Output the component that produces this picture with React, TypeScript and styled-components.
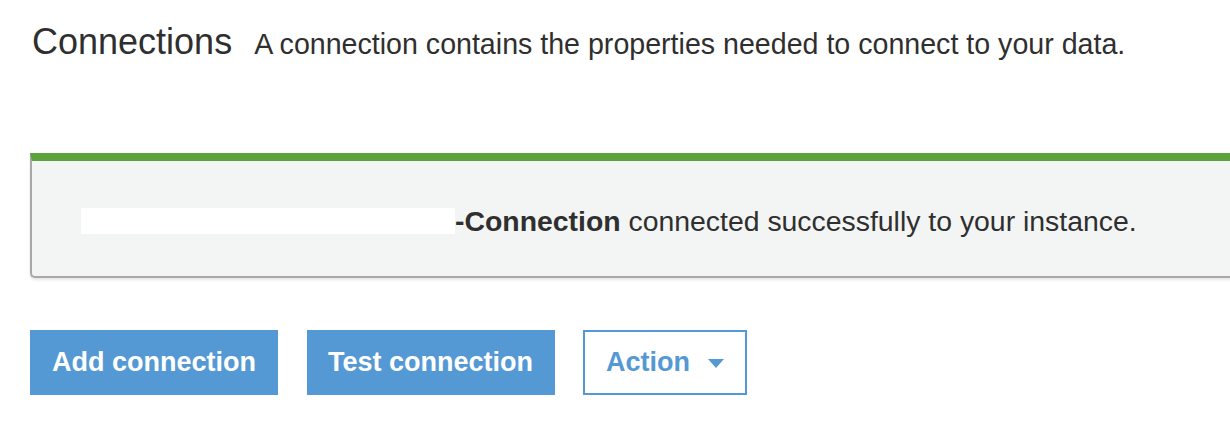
import React from "react";
import styled, { createGlobalStyle } from "styled-components";

const Global = createGlobalStyle`
  html, body { margin: 0; padding: 0; background: #fff; }
  body { font-family: "Liberation Sans", Arial, sans-serif; color: #2f2f2f; overflow: hidden; }
`;

const Page = styled.div`
  width: 1230px;
  height: 424px;
  overflow: hidden;
  padding: 0 0 0 30px;
  box-sizing: border-box;
`;

const Header = styled.header`
  display: flex;
  align-items: baseline;
  gap: 22px;
  padding: 22px 0 0 2px;
  height: 153px;
  box-sizing: border-box;
`;

const Title = styled.h1`
  margin: 0;
  font-size: 36px;
  font-weight: 400;
  line-height: 40px;
  color: #2f2f2f;
`;

const Subtitle = styled.p`
  margin: 0;
  font-size: 28.6px;
  line-height: 32px;
  color: #2f2f2f;
`;

const Flash = styled.div`
  width: 1230px;
  height: 125px;
  box-sizing: border-box;
  background: #f3f5f4;
  border-top: 8px solid #5aa33a;
  border-left: 2px solid #a8a8a8;
  border-bottom: 2px solid #a8a8a8;
  border-bottom-left-radius: 5px;
  box-shadow: 0 2px 3px rgba(0, 0, 0, 0.1);
  display: flex;
  align-items: center;
  padding-left: 49px;
  padding-top: 4px;
`;

const Message = styled.p`
  margin: 0;
  font-size: 28.4px;
  line-height: 32px;
  color: #2f2f2f;
  display: flex;
  align-items: center;
  white-space: pre;
`;

const Redacted = styled.span`
  display: inline-block;
  width: 374px;
  height: 26px;
  background: #fff;
`;

const Strong = styled.strong`
  font-weight: 700;
`;

const Toolbar = styled.div`
  display: flex;
  gap: 28.5px;
  margin-top: 52px;
`;

const Button = styled.button<{ $outline?: boolean; $w: number }>`
  width: ${(p) => p.$w}px;
  height: 65px;
  box-sizing: border-box;
  font-family: "Liberation Sans", Arial, sans-serif;
  font-size: 27px;
  font-weight: 700;
  display: flex;
  align-items: center;
  justify-content: center;
  gap: 18px;
  padding: 0;
  cursor: pointer;
  background: ${(p) => (p.$outline ? "#fff" : "#5499d3")};
  color: ${(p) => (p.$outline ? "#5499d3" : "#fff")};
  border: ${(p) => (p.$outline ? "2px solid #5499d3" : "none")};
`;

const Caret = styled.span`
  width: 0;
  height: 0;
  border-left: 8px solid transparent;
  border-right: 8px solid transparent;
  border-top: 9px solid #5499d3;
  margin-top: 2px;
`;

export default function App() {
  return (
    <>
      <Global />
      <Page>
        <Header>
          <Title>Connections</Title>
          <Subtitle>A connection contains the properties needed to connect to your data.</Subtitle>
        </Header>
        <Flash>
          <Message>
            <Redacted />
            <Strong>-Connection</Strong> connected successfully to your instance.
          </Message>
        </Flash>
        <Toolbar>
          <Button $w={248}>Add connection</Button>
          <Button $w={248}>Test connection</Button>
          <Button $outline $w={164}>
            Action
            <Caret />
          </Button>
        </Toolbar>
      </Page>
    </>
  );
}
